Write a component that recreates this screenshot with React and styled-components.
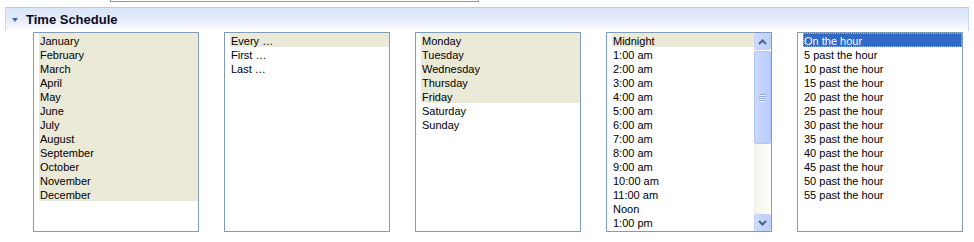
import React from "react";
import styled, { createGlobalStyle } from "styled-components";

const Global = createGlobalStyle`
  html, body { margin: 0; padding: 0; background: #fff; }
  body { font-family: "Liberation Sans", Arial, sans-serif; }
`;

const Page = styled.div`
  width: 974px;
  height: 242px;
  overflow: hidden;
  background: #fff;
`;

const TopField = styled.div`
  margin-left: 110px;
  width: 369px;
  height: 2px;
  box-sizing: border-box;
  border: 1px solid #7f9db9;
  border-top: none;
`;

const Header = styled.div`
  margin: 5px 5px 0 5px;
  height: 24px;
  box-sizing: border-box;
  border: 1px solid #b7caee;
  border-bottom: none;
  border-left-color: #c9d7f3;
  border-right-color: #c9d7f3;
  background: linear-gradient(to bottom, #dbe5f9 0%, #e2eafa 45%, #f3f6fd 80%, #ffffff 100%);
  display: flex;
  align-items: center;
  padding-left: 6px;
  gap: 8px;
`;

const Caret = styled.span`
  width: 0;
  height: 0;
  border-left: 3px solid transparent;
  border-right: 3px solid transparent;
  border-top: 4px solid #3a6bc6;
  margin-top: 1px;
`;

const Title = styled.span`
  font-family: "Liberation Sans", Arial, sans-serif;
  font-weight: bold;
  font-size: 13px;
  color: #0a0a1e;
  line-height: 16px;
`;

const Body = styled.div`
  display: flex;
  gap: 25px;
  padding-left: 33px;
  margin-top: 1px;
`;

const Box = styled.div`
  width: 166px;
  height: 200px;
  box-sizing: border-box;
  border: 1px solid #7f9db9;
  background: #fff;
  display: flex;
  overflow: hidden;
`;

const ListArea = styled.div`
  flex: 1;
  min-width: 0;
  padding-left: 5px;
  overflow: hidden;
`;

const Item = styled.div`
  height: 14px;
  box-sizing: border-box;
  padding-top: 1px;
  line-height: 14px;
  font-size: 11px;
  padding-left: 1px;
  color: ${(p) => (p.$selected ? "#fff" : "#000")};
  background: ${(p) => (p.$selected ? "#316ac5" : p.$marked ? "#ebe9d7" : "transparent")};
  outline: ${(p) => (p.$selected ? "1px dotted #e9b55a" : "none")};
  outline-offset: -1px;
  white-space: nowrap;
`;

const ScrollBar = styled.div`
  width: 17px;
  flex: none;
  display: flex;
  flex-direction: column;
  background: linear-gradient(to right, #f3f1ea, #fefefb);
`;

const ScrollButton = styled.div`
  height: 17px;
  box-sizing: border-box;
  border: 1px solid #c0d1f9;
  border-radius: 2px;
  background: linear-gradient(to right, #cddbfd, #bccefa);
  display: flex;
  align-items: center;
  justify-content: center;
  flex: none;
`;

const Thumb = styled.div`
  height: 93px;
  margin-top: 1px;
  box-sizing: border-box;
  border: 1px solid #b0c5f6;
  border-radius: 2px;
  background: linear-gradient(to right, #cad9fd, #b9ccfb);
  display: flex;
  align-items: center;
  justify-content: center;
  flex: none;
`;

const Track = styled.div`
  flex: 1;
`;

const Grip = styled.div`
  width: 7px;
  display: flex;
  flex-direction: column;
  gap: 1px;
  & > span {
    height: 1px;
    background: #8ea6e0;
    box-shadow: 0 1px 0 #eef3ff;
  }
`;

const Chevron = ({ up }) => (
  <svg width="9" height="6" viewBox="0 0 9 6">
    <path
      d={up ? "M1 5 L4.5 1.5 L8 5" : "M1 1 L4.5 4.5 L8 1"}
      fill="none"
      stroke="#4d6185"
      strokeWidth="2"
    />
  </svg>
);

const months = ["January","February","March","April","May","June","July","August","September","October","November","December"];
const ordinals = ["Every …", "First …", "Last …"];
const days = ["Monday","Tuesday","Wednesday","Thursday","Friday","Saturday","Sunday"];
const hours = ["Midnight", ...Array.from({ length: 11 }, (_, i) => `${i + 1}:00 am`), "Noon", "1:00 pm"];
const minutes = ["On the hour", ...Array.from({ length: 11 }, (_, i) => `${(i + 1) * 5} past the hour`)];

const List = ({ items, marked = [], selected = [] }) => (
  <ListArea>
    {items.map((t, i) => (
      <Item key={t} $marked={marked.includes(i)} $selected={selected.includes(i)}>
        {t}
      </Item>
    ))}
  </ListArea>
);

export default function App() {
  return (
    <Page>
      <Global />
      <TopField />
      <Header>
        <Caret />
        <Title>Time Schedule</Title>
      </Header>
      <Body>
        <Box>
          <List items={months} marked={months.map((_, i) => i)} />
        </Box>
        <Box>
          <List items={ordinals} marked={[0]} />
        </Box>
        <Box>
          <List items={days} marked={[0, 1, 2, 3, 4]} />
        </Box>
        <Box>
          <List items={hours} marked={[0]} />
          <ScrollBar>
            <ScrollButton><Chevron up /></ScrollButton>
            <Thumb>
              <Grip><span /><span /><span /><span /></Grip>
            </Thumb>
            <Track />
            <ScrollButton><Chevron /></ScrollButton>
          </ScrollBar>
        </Box>
        <Box>
          <List items={minutes} selected={[0]} />
        </Box>
      </Body>
    </Page>
  );
}
